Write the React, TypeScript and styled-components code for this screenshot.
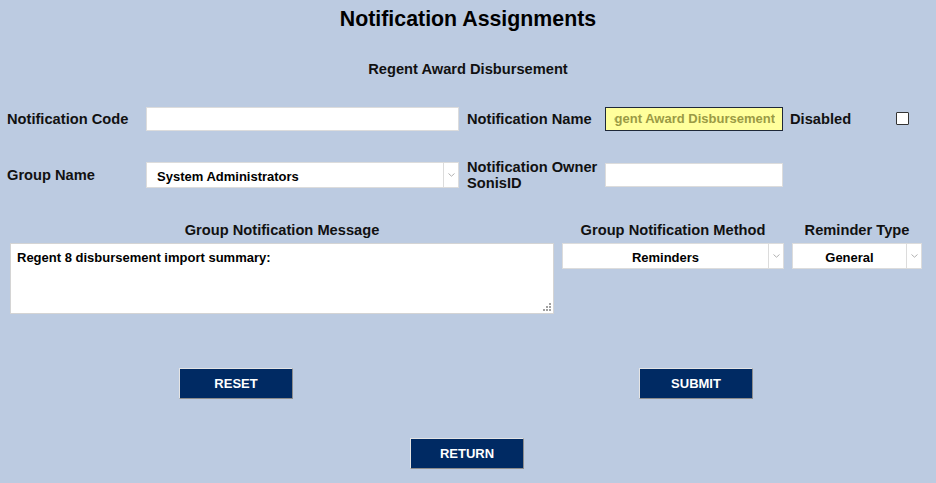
import React from 'react';
import styled, { createGlobalStyle } from 'styled-components';

const GlobalStyle = createGlobalStyle`
  html, body {
    margin: 0;
    padding: 0;
    background: #bccbe1;
  }
  body {
    font-family: "Liberation Sans", Arial, sans-serif;
    color: #111;
  }
`;

const Page = styled.div`
  width: 936px;
  min-height: 483px;
  background: #bccbe1;
`;

const Title = styled.h1`
  margin: 0;
  padding-top: 7px;
  font-size: 21.33px;
  font-weight: bold;
  text-align: center;
  color: #000;
`;

const SubTitle = styled.h2`
  margin: 29px 0 0;
  font-size: 14.67px;
  font-weight: bold;
  text-align: center;
`;

const FieldGrid = styled.div`
  display: grid;
  grid-template-columns: 139px 321px 138px 185px 106px 13px;
  grid-auto-rows: 36px;
  row-gap: 20px;
  align-items: center;
  padding-left: 7px;
  margin-top: 23.6px;
`;

const Label = styled.label`
  font-size: 14.67px;
  font-weight: bold;
  line-height: normal;
`;

const TextInput = styled.input<{ $w: number }>`
  box-sizing: border-box;
  width: ${p => p.$w}px;
  height: 24px;
  margin: 0;
  padding: 0 6px;
  border: 1px solid #dcdcdc;
  background: #fff;
  font-family: inherit;
  font-size: 13px;
  font-weight: bold;
  outline: none;
`;

// the name field is scrolled to its end, as in the original
const ReadOnlyInput = styled(TextInput)`
  background: #ffff9c;
  border-color: #1e2838;
  color: #9a9a44;
  direction: rtl;
  padding: 0 7px 0 8px;
`;

const CheckBox = styled.input`
  appearance: none;
  box-sizing: border-box;
  width: 13px;
  height: 13px;
  margin: 0;
  border: 1px solid #333;
  border-radius: 1px;
  background: #fff;
`;

const SelectWrap = styled.div<{ $w: number }>`
  position: relative;
  width: ${p => p.$w}px;
  height: 26px;
`;

const NativeSelect = styled.select<{ $center?: boolean }>`
  appearance: none;
  box-sizing: border-box;
  width: 100%;
  height: 100%;
  margin: 0;
  padding: ${p => (p.$center ? '3px 15px 0 0' : '3px 15px 0 10px')};
  border: 1px solid #dcdcdc;
  border-radius: 0;
  background: #fff;
  color: #000;
  font-family: inherit;
  font-size: 13px;
  font-weight: bold;
  text-align: ${p => (p.$center ? 'center' : 'left')};
  text-align-last: ${p => (p.$center ? 'center' : 'left')};
  outline: none;
`;

const ArrowBox = styled.span`
  position: absolute;
  top: 1px;
  right: 1px;
  bottom: 1px;
  width: 14px;
  border-left: 1px solid #dcdcdc;
  display: flex;
  align-items: center;
  justify-content: center;
  pointer-events: none;
`;

const Chevron = () => (
  <svg width="7" height="4" viewBox="0 0 7 4">
    <path d="M0.5 0.5 L3.5 3.2 L6.5 0.5" fill="none" stroke="#b0b0b0" strokeWidth="1" />
  </svg>
);

const Select: React.FC<{ width: number; center?: boolean; value: string }> = ({ width, center, value }) => (
  <SelectWrap $w={width}>
    <NativeSelect $center={center} defaultValue={value}>
      <option value={value}>{value}</option>
    </NativeSelect>
    <ArrowBox>
      <Chevron />
    </ArrowBox>
  </SelectWrap>
);

const MessageGrid = styled.div`
  display: grid;
  grid-template-columns: 544px 222px 130px;
  column-gap: 8px;
  row-gap: 4.6px;
  align-items: start;
  padding-left: 10px;
  margin-top: 29.5px;
`;

const ColumnHead = styled.div`
  font-size: 14.67px;
  font-weight: bold;
  text-align: center;
`;

const MessageWrap = styled.div`
  position: relative;
  width: 544px;
  height: 71px;
`;

const MessageBox = styled.textarea`
  display: block;
  box-sizing: border-box;
  width: 100%;
  height: 100%;
  margin: 0;
  padding: 6px 6px 3px;
  border: 1px solid #d4d4d4;
  background: #fff;
  color: #000;
  font-family: inherit;
  font-size: 13px;
  font-weight: bold;
  resize: none;
  outline: none;
`;

const Grip = styled.svg`
  position: absolute;
  right: 3px;
  bottom: 3px;
  pointer-events: none;
`;

const ResizeGrip = () => (
  <Grip width="8" height="8" viewBox="0 0 8 8">
    <g fill="#a0a0a0">
      <rect x="6" y="0" width="2" height="2" />
      <rect x="3" y="3" width="2" height="2" />
      <rect x="6" y="3" width="2" height="2" />
      <rect x="0" y="6" width="2" height="2" />
      <rect x="3" y="6" width="2" height="2" />
      <rect x="6" y="6" width="2" height="2" />
    </g>
  </Grip>
);

const ButtonRow = styled.div<{ $top: number; $split?: boolean }>`
  display: flex;
  justify-content: ${p => (p.$split ? 'space-between' : 'center')};
  padding: ${p => (p.$split ? '0 183px 0 179px' : '0 2px 0 0')};
  margin-top: ${p => p.$top}px;
`;

const NavButton = styled.button`
  box-sizing: border-box;
  width: 114px;
  height: 31px;
  margin: 0;
  padding: 1px 0 0;
  background: #002a63;
  border: 1px solid;
  border-color: #e4e4e4 #8c8c8c #8c8c8c #e4e4e4;
  color: #fff;
  font-family: inherit;
  font-size: 13px;
  font-weight: bold;
  cursor: pointer;
`;

const App: React.FC = () => (
  <Page>
    <GlobalStyle />
    <Title>Notification Assignments</Title>
    <SubTitle>Regent Award Disbursement</SubTitle>

    <FieldGrid>
      <Label>Notification Code</Label>
      <TextInput $w={313} type="text" defaultValue="" />
      <Label>Notification Name</Label>
      <ReadOnlyInput $w={178} type="text" readOnly value="Regent Award Disbursement" />
      <Label>Disabled</Label>
      <CheckBox type="checkbox" />

      <Label>Group Name</Label>
      <Select width={313} value="System Administrators" />
      <Label>
        Notification Owner
        <br />
        SonisID
      </Label>
      <TextInput $w={178} type="text" defaultValue="" />
    </FieldGrid>

    <MessageGrid>
      <ColumnHead>Group Notification Message</ColumnHead>
      <ColumnHead>Group Notification Method</ColumnHead>
      <ColumnHead>Reminder Type</ColumnHead>
      <MessageWrap>
        <MessageBox defaultValue="Regent 8 disbursement import summary:" />
        <ResizeGrip />
      </MessageWrap>
      <Select width={222} center value="Reminders" />
      <Select width={130} center value="General" />
    </MessageGrid>

    <ButtonRow $top={54} $split>
      <NavButton>RESET</NavButton>
      <NavButton>SUBMIT</NavButton>
    </ButtonRow>
    <ButtonRow $top={39}>
      <NavButton>RETURN</NavButton>
    </ButtonRow>
  </Page>
);

export default App;
